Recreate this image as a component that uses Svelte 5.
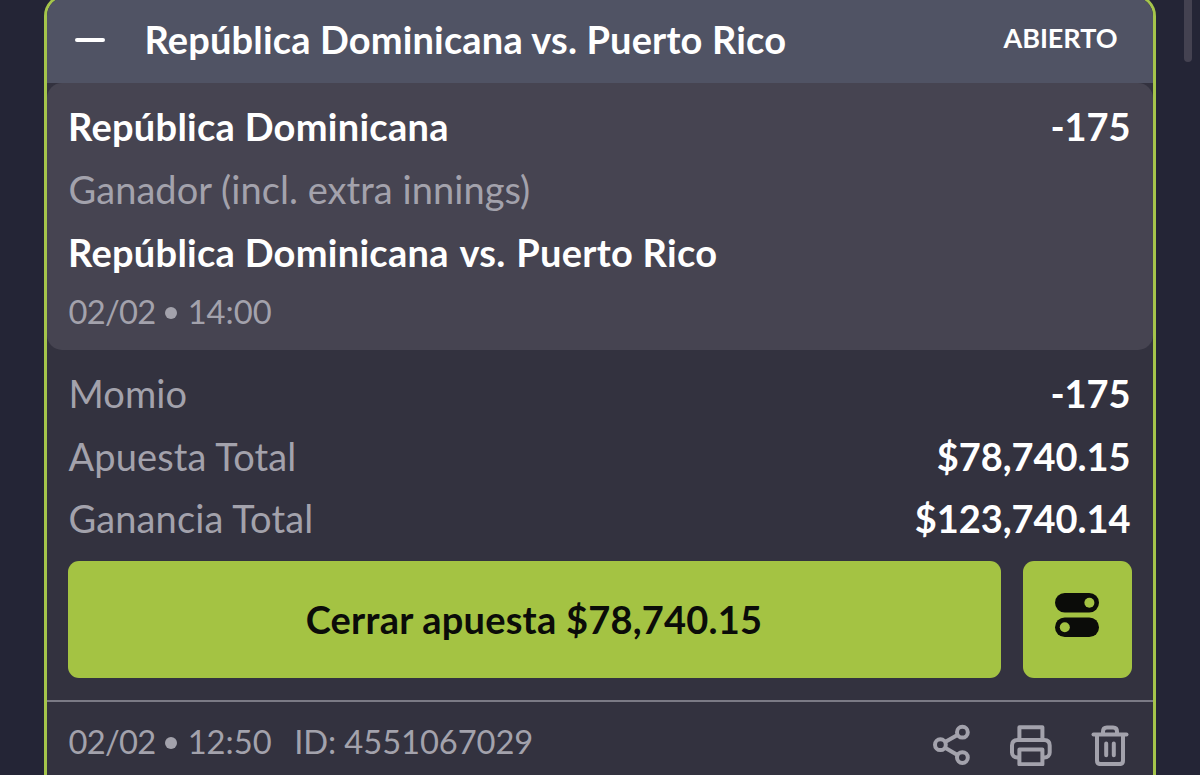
<script lang="ts">
  interface Row {
    label: string;
    value: string;
  }

  const home = 'República Dominicana';
  const away = 'Puerto Rico';
  const stake = '$78,740.15';

  const totals: Row[] = [
    { label: 'Momio', value: '-175' },
    { label: 'Apuesta Total', value: stake },
    { label: 'Ganancia Total', value: '$123,740.14' }
  ];
</script>

{#snippet when(day: string, time: string)}
  <div class="date">
    <span class="day">{day}</span>
    <i class="dot"></i>
    <span>{time}</span>
  </div>
{/snippet}

<main class="page">
  <article class="card">
    <header class="header">
      <span class="collapse"></span>
      <h1 class="title">{home} vs. {away}</h1>
      <span class="status">ABIERTO</span>
    </header>

    <section class="selection">
      <div class="row strong">
        <span>{home}</span>
        <span class="value">-175</span>
      </div>
      <div class="row market">Ganador (incl. extra innings)</div>
      <div class="row strong event">
        <span>{home}</span>
        <span>vs.</span>
        <span>{away}</span>
      </div>
      {@render when('02/02', '14:00')}
    </section>

    <section class="totals">
      {#each totals as row}
        <div class="row">
          <span class="label">{row.label}</span>
          <span class="value">{row.value}</span>
        </div>
      {/each}
    </section>

    <div class="actions">
      <button class="cashout">Cerrar apuesta {stake}</button>
      <button class="settings" aria-label="Opciones">
        <svg width="44" height="44" viewBox="0 0 44 44">
          <rect width="44" height="19.5" rx="9.75" fill="#0b0c09" />
          <rect y="24.5" width="44" height="19.5" rx="9.75" fill="#0b0c09" />
          <circle cx="34.4" cy="9.8" r="5" fill="#a4c343" />
          <circle cx="9.8" cy="34.3" r="5" fill="#a4c343" />
        </svg>
      </button>
    </div>

    <footer class="footer">
      {@render when('02/02', '12:50')}
      <span class="ticket">ID: 4551067029</span>
      <div class="tools">
        <svg width="38" height="42" viewBox="0 0 38 42">
          <path d="M12.5 17.8 24.5 11M12.5 24l12 7" />
          <circle cx="7.4" cy="20.7" r="5.4" />
          <circle cx="29.4" cy="8.2" r="5.4" />
          <circle cx="29.4" cy="33.6" r="5.4" />
        </svg>
        <svg width="42" height="42" viewBox="0 0 42 42">
          <path d="M9.4 15.5V3.3h23v12.2" />
          <path d="M9.4 33.5H7.2c-3 0-5.2-2-5.2-5v-7c0-3.5 2-5.5 5.5-5.5h26.7c3.5 0 5.5 2 5.5 5.5v7c0 3-2.2 5-5.2 5h-2.1" />
          <path d="M9.4 25.5h23v14.7h-23z" />
        </svg>
        <svg width="38" height="42" viewBox="0 0 38 42">
          <path d="M2.5 10.6h33" stroke-linecap="round" />
          <path d="M12 10.5v-3c0-2.5 1.4-4 3.9-4h6.2c2.5 0 3.9 1.5 3.9 4v3" />
          <path d="M6 11v25.6c0 2.3 1.2 3.5 3.5 3.5h19c2.3 0 3.5-1.2 3.5-3.5V11" />
          <path d="M15.2 19.6v11.6M22.8 19.6v11.6" stroke-linecap="round" />
        </svg>
      </div>
    </footer>
  </article>
  <div class="scrollbar"></div>
</main>

<style>
  :global(body) {
    margin: 0;
    background: #242536;
  }

  .page {
    position: relative;
    box-sizing: border-box;
    width: 1200px;
    height: 775px;
    padding: 0 44.5px 0 43.5px;
    overflow: hidden;
    background: #242536;
    font-family: Lato, sans-serif;
    font-size: 38px;
    color: #fff;
    white-space: nowrap;
  }

  .card {
    box-sizing: border-box;
    height: 830px;
    margin-top: -6px;
    border: 3px solid #a5c54b;
    border-radius: 22px;
    background: #33323f;
    overflow: hidden;
  }

  .header {
    box-sizing: border-box;
    display: flex;
    align-items: center;
    height: 86px;
    padding: 6px 35px 0 28px;
    background: #505364;
  }

  .collapse {
    width: 30px;
    height: 4px;
    margin: -6px 40px 0 0;
    border-radius: 2px;
    background: #fff;
  }

  .title {
    margin: -9px auto 0 0;
    font-size: 38px;
    font-weight: 700;
    line-height: 46px;
    letter-spacing: 0.15px;
  }

  .status {
    margin-top: -11px;
    font-size: 27px;
    font-weight: 700;
    letter-spacing: -0.03px;
  }

  .selection {
    box-sizing: border-box;
    height: 267.2px;
    padding: 12px 22px 0;
    border-radius: 15px;
    background: #464451;
  }

  .row {
    display: flex;
    justify-content: space-between;
    height: 62.8px;
    line-height: 62.8px;
  }

  .strong,
  .value {
    font-weight: 700;
  }

  .strong {
    margin-left: -0.5px;
    letter-spacing: 0.27px;
  }

  .value {
    letter-spacing: -0.05px;
  }

  .event {
    justify-content: flex-start;
    gap: 10.7px;
  }

  .market,
  .label,
  .date,
  .ticket {
    color: #a3a2ac;
  }

  .market {
    letter-spacing: 0.05px;
  }

  .label {
    letter-spacing: 0.12px;
  }

  .date,
  .ticket {
    font-size: 32.7px;
    line-height: 55px;
  }

  .date {
    display: flex;
    align-items: center;
  }

  .selection .date {
    margin-top: 0.5px;
  }

  .day {
    letter-spacing: -0.7px;
  }

  .dot {
    width: 12px;
    height: 12px;
    margin: 4px 10.5px 0 9.5px;
    border-radius: 50%;
    background: currentColor;
  }

  .totals {
    padding: 11.6px 22px 0.7px;
  }

  .actions {
    display: flex;
    gap: 22px;
    padding: 10px 20.5px 22px 21.5px;
  }

  button {
    display: flex;
    align-items: center;
    justify-content: center;
    height: 117px;
    padding: 0;
    border: 0;
    border-radius: 11px;
    background: #a4c343;
    color: #0b0c09;
    font: 700 38px Lato, sans-serif;
  }

  .cashout {
    flex: 1;
    padding-right: 1px;
    letter-spacing: 0.22px;
  }

  .settings {
    width: 109px;
  }

  .settings svg {
    margin: -8px 1px 0 0;
  }

  .footer {
    display: flex;
    align-items: center;
    height: 79px;
    padding: 0 24px 0 22px;
    border-top: 2px solid #7b7a85;
  }

  .ticket {
    margin: 0 auto 0 22.5px;
    letter-spacing: -0.08px;
  }

  .tools {
    display: flex;
    gap: 39px;
    margin-top: 8px;
  }

  .tools svg {
    fill: none;
    stroke: #a3a2ac;
    stroke-width: 4;
    stroke-linejoin: round;
  }

  .scrollbar {
    position: absolute;
    top: -10px;
    left: 1184px;
    width: 8px;
    height: 72px;
    border-radius: 4px;
    background: #444251;
  }
</style>
